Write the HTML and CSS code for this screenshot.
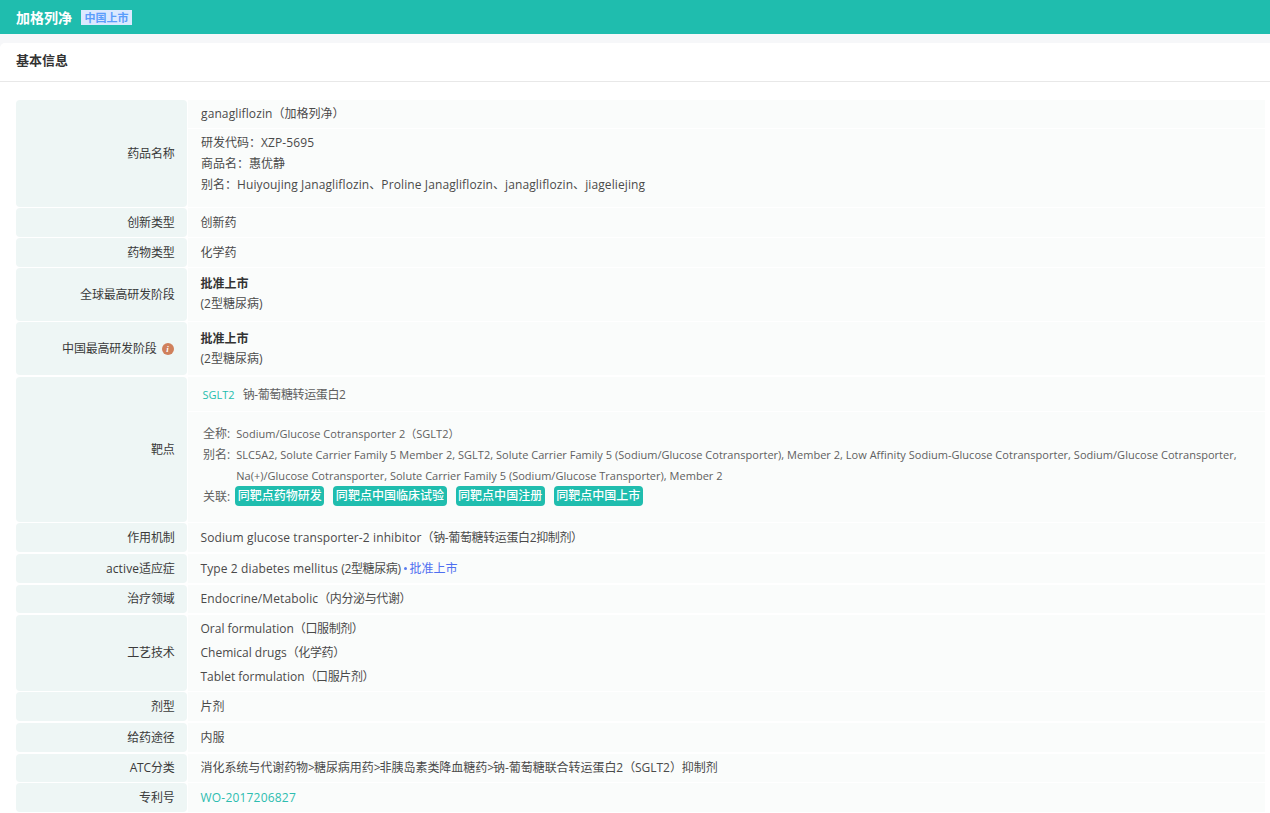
FILE: index.html
```html
<!DOCTYPE html>
<html lang="zh">
<head>
<meta charset="utf-8">
<title>加格列净</title>
<link rel="stylesheet" href="styles.css">
</head>
<body>
<header class="topbar"><span class="drug-title">加格列净</span><span class="status-tag">中国上市</span></header>
<main class="panel">
  <h2 class="panel-title">基本信息</h2>
  <div class="info">
    <div class="row r-name">
      <div class="label">药品名称</div>
      <div class="value stack">
        <div class="sub sub-a"><span class="lat">ganagliflozin</span>（加格列净）</div>
        <div class="sub sub-b"><div>研发代码：<span class="lat">XZP-5695</span></div><div>商品名：惠优静</div><div>别名：<span class="lat">Huiyoujing Janagliflozin</span>、<span class="lat">Proline Janagliflozin</span>、<span class="lat">janagliflozin</span>、<span class="lat">jiageliejing</span></div></div>
      </div>
    </div>
    <div class="row r-s"><div class="label">创新类型</div><div class="value cell">创新药</div></div>
    <div class="row r-s"><div class="label">药物类型</div><div class="value cell">化学药</div></div>
    <div class="row r-stage"><div class="label">全球最高研发阶段</div><div class="value cell stage"><strong>批准上市</strong><div>(2型糖尿病)</div></div></div>
    <div class="row r-stage r-stage-b"><div class="label">中国最高研发阶段<span class="info-icon">i</span></div><div class="value cell stage"><strong>批准上市</strong><div>(2型糖尿病)</div></div></div>
    <div class="row r-target">
      <div class="label">靶点</div>
      <div class="value stack">
        <div class="sub sub-t"><a class="t-link">SGLT2</a><span class="zh">钠-葡萄糖转运蛋白2</span></div>
        <div class="sub sub-d">
          <div class="d-line"><span class="d-key">全称:</span><span>Sodium/Glucose Cotransporter 2（SGLT2）</span></div>
          <div class="d-line"><span class="d-key">别名:</span><span>SLC5A2, Solute Carrier Family 5 Member 2, SGLT2, Solute Carrier Family 5 (Sodium/Glucose Cotransporter), Member 2, Low Affinity Sodium-Glucose Cotransporter, Sodium/Glucose Cotransporter, Na(+)/Glucose Cotransporter, Solute Carrier Family 5 (Sodium/Glucose Transporter), Member 2</span></div>
          <div class="d-line d-rel"><span class="d-key">关联:</span><span class="btns"><a class="btn">同靶点药物研发</a><a class="btn">同靶点中国临床试验</a><a class="btn">同靶点中国注册</a><a class="btn">同靶点中国上市</a></span></div>
        </div>
      </div>
    </div>
    <div class="row r-m"><div class="label">作用机制</div><div class="value cell"><span class="lat">Sodium glucose transporter-2 inhibitor</span><span class="zh">（钠-葡萄糖转运蛋白2抑制剂）</span></div></div>
    <div class="row r-l"><div class="label"><span class="lat">active</span>适应症</div><div class="value cell"><span class="lat">Type 2 diabetes mellitus</span>&nbsp;<span class="zh">(2型糖尿病)</span><i class="dot"></i><a class="blue">批准上市</a></div></div>
    <div class="row r-s"><div class="label">治疗领域</div><div class="value cell"><span class="lat">Endocrine/Metabolic</span><span class="zh">（内分泌与代谢）</span></div></div>
    <div class="row r-tech"><div class="label">工艺技术</div><div class="value cell tech"><div>Oral formulation<span class="zh">（口服制剂）</span></div><div>Chemical drugs<span class="zh">（化学药）</span></div><div>Tablet formulation<span class="zh">（口服片剂）</span></div></div></div>
    <div class="row r-m"><div class="label">剂型</div><div class="value cell">片剂</div></div>
    <div class="row r-l"><div class="label">给药途径</div><div class="value cell">内服</div></div>
    <div class="row r-f"><div class="label">ATC分类</div><div class="value cell"><span class="atc">消化系统与代谢药物<span class="gt">&gt;</span>糖尿病用药<span class="gt">&gt;</span>非胰岛素类降血糖药<span class="gt">&gt;</span>钠-葡萄糖联合转运蛋白2（SGLT2）抑制剂</span></div></div>
    <div class="row r-s"><div class="label">专利号</div><div class="value cell"><a class="patent">WO-2017206827</a></div></div>
  </div>
</main>
</body>
</html>
```
FILE: styles.css
```css
* { box-sizing: border-box; }
html, body { margin: 0; height: 813px; overflow: hidden; }
body {
  background: #f6f7f9;
  color: #4a4a4a;
  font: 12px/21px "Open Sans", "Noto Sans CJK SC", sans-serif;
}
.topbar {
  height: 34px;
  background: #1fbdae;
  padding-left: 16px;
  display: flex;
  align-items: center;
  gap: 9px;
}
.drug-title { color: #fff; font-size: 14px; font-weight: 700; }
.status-tag {
  background: #dbe9ff;
  color: #5b9dfb;
  font-size: 11px;
  font-weight: 700;
  line-height: 15px;
  padding: 0 3.5px;
}
.panel {
  margin-top: 9px;
  height: 770px;
  background: #fff;
  border-radius: 5px 0 0 0;
}
.panel-title {
  margin: 0;
  height: 39px;
  padding-left: 16px;
  border-bottom: 1px solid #e8e8e8;
  font-size: 13px;
  font-weight: 700;
  line-height: 35px;
  color: #333;
}
.info {
  margin: 18px 5px 0 16px;
  display: flex;
  flex-direction: column;
  gap: 1.5px;
}
.row { display: flex; }
.label {
  flex: 0 0 171px;
  background: #eef6f5;
  border-radius: 4px;
  padding-right: 12.5px;
  display: flex;
  justify-content: flex-end;
  align-items: center;
  color: #3a3a3a;
  letter-spacing: -.2px;
}
.value { flex: 1; margin-left: 1px; background: #fafcfb; }
.cell { display: flex; align-items: center; padding-left: 12.5px; }
.stack { display: flex; flex-direction: column; gap: 1px; background: transparent; }
.sub { background: #fafcfb; padding-left: 13px; }
.lat { letter-spacing: .11px; }
.zh { letter-spacing: -.38px; }
.atc { letter-spacing: -.05px; }
.r-name { height: 106.5px; }
.r-s { height: 28.5px; }
.r-m { height: 29px; }
.r-l { height: 29.5px; }
.r-f { height: 28px; }
.r-stage { height: 52.5px; }
.r-stage-b { height: 53px; }
.r-target { height: 145px; }
.r-tech { height: 76px; }
.sub-a { height: 28px; line-height: 28px; }
.sub-b { flex: 1; padding-top: 3px; }
.stage { flex-direction: column; align-items: flex-start; justify-content: center; line-height: 20px; }
.stage strong { color: #333; font-weight: 700; }
.tech { flex-direction: column; align-items: flex-start; justify-content: center; line-height: 24px; }
.info-icon {
  width: 12px;
  height: 12px;
  margin: 0 1px 0 5px;
  border-radius: 50%;
  background: #d0805c;
  color: #fff;
  font: italic 700 9px/12px "Liberation Serif", serif;
  text-align: center;
}
.sub-t { height: 34px; line-height: 35px; padding-left: 14.5px; color: #5f5f5f; }
.t-link { margin-right: 8px; color: #1fbdae; font-size: 11px; }
.sub-d { flex: 1; padding: 11px 28px 0 15px; font-size: 11px; color: #5f5f5f; letter-spacing: .02px; }
.d-line { display: flex; gap: 6px; }
.d-key { flex: none; font-size: 12px; }
.d-rel { align-items: center; gap: 5px; }
.btns { display: flex; gap: 9px; font-size: 12px; }
.btn {
  background: #1fbdae;
  color: #fff;
  border-radius: 4px;
  padding: 0 2.5px;
  line-height: 20px;
  font-weight: 500;
}
.gt { letter-spacing: -1px; }
.dot { width: 3px; height: 3px; margin: 0 3px; background: #5a7cf0; display: inline-block; border-radius: 50%; }
.blue { color: #4f6ff0; }
.patent { color: #2dbdb0; letter-spacing: .2px; }
```
